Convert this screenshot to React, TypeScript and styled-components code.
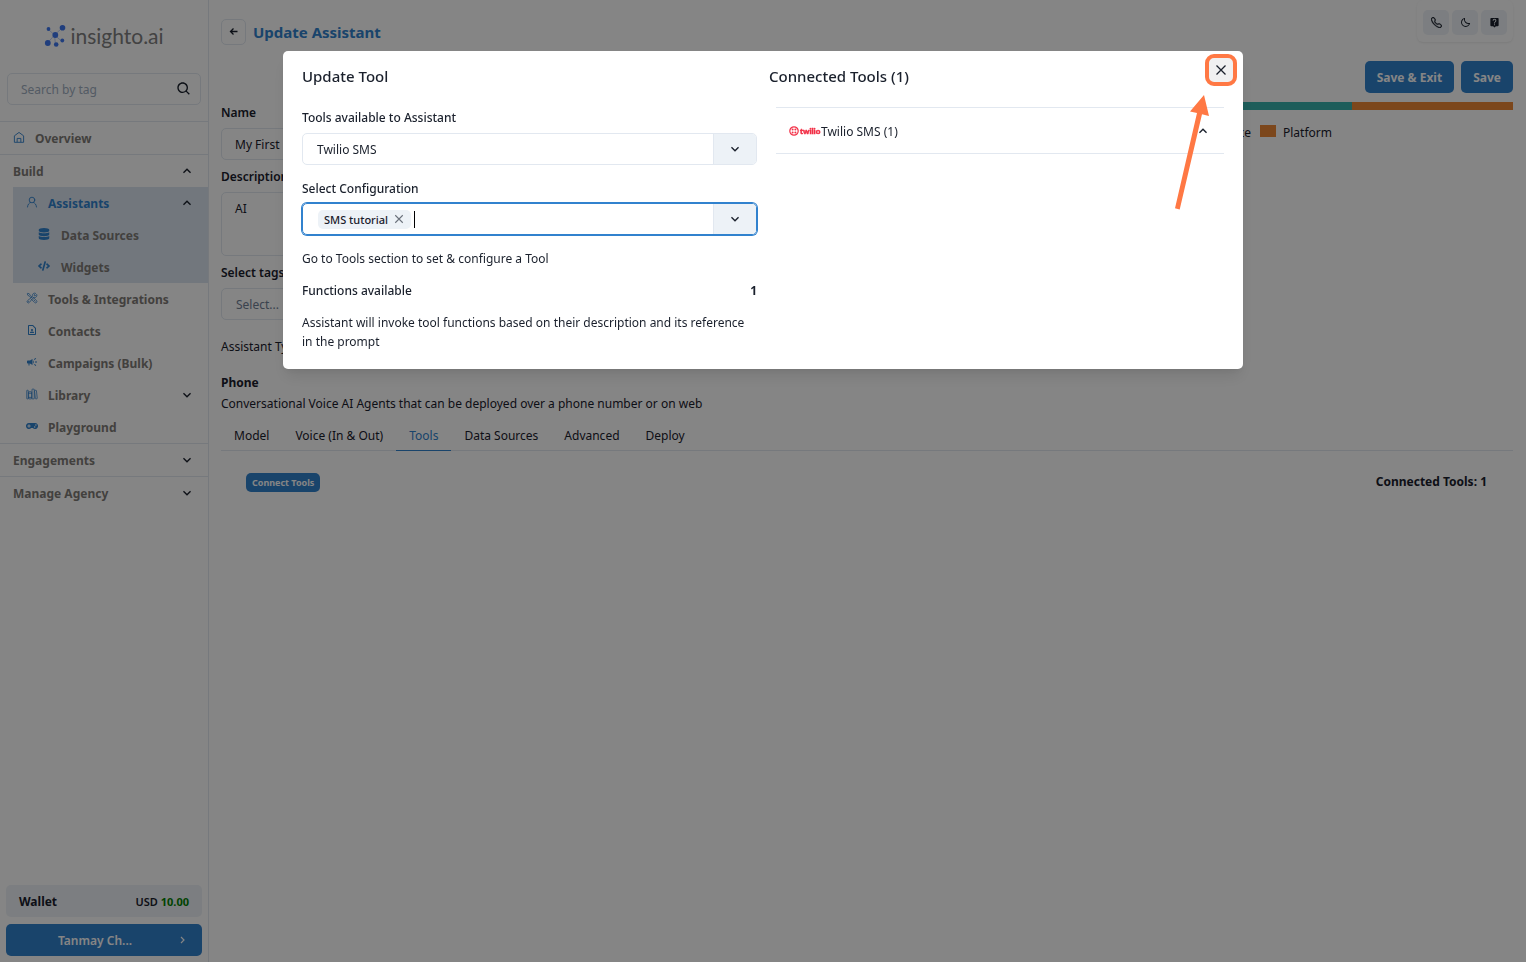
import React from 'react';
import styled, { createGlobalStyle } from 'styled-components';
import { BiMoon, BiSearch } from 'react-icons/bi';
import { FaCode, FaDatabase, FaGamepad } from 'react-icons/fa';
import { IoLibraryOutline } from 'react-icons/io5';
import { BsTelephone } from 'react-icons/bs';
import { HiOutlineWrenchScrewdriver } from 'react-icons/hi2';
import { MdCampaign, MdLiveHelp, MdOutlineContactPage } from 'react-icons/md';

const c = {
  text: '#1a202c',
  nav: '#7f7c78',
  blue: '#3182ce',
  line: '#e2e8f0',
  soft: '#edf2f7',
  selected: '#dbe5f0',
  orange: '#ed8936',
  teal: '#38b2ac',
  marker: '#ff7844',
};

const Global = createGlobalStyle`
  *, *::before, *::after { box-sizing: border-box; }
  body {
    margin: 0;
    color: ${c.text};
    background: #fff;
    font: 400 12px/19px "Segoe UI", "Noto Sans", "Open Sans", sans-serif;
  }
  button, input, textarea, select { font: inherit; color: inherit; margin: 0; }
  button { cursor: pointer; border: 0; background: none; padding: 0; }
  h1, h2, h3, p, ul { margin: 0; padding: 0; }
  ul { list-style: none; }
  a { color: inherit; text-decoration: none; }
`;

/* ---------- shell ---------- */

const Shell = styled.div`
  display: flex;
  min-height: 100vh;
`;

const Sidebar = styled.nav`
  flex: none;
  display: flex;
  flex-direction: column;
  width: 209px;
  border-right: 1px solid ${c.line};
`;

const Brand = styled.a`
  display: flex;
  align-items: center;
  justify-content: center;
  gap: 4px;
  height: 73px;
  padding-bottom: 2px;
  color: #808080;
  font: 400 21px/24px Lato, sans-serif;
`;

const SearchBox = styled.label`
  display: flex;
  align-items: center;
  justify-content: space-between;
  height: 32px;
  margin: 0 7px 16px;
  padding: 0 8px 0 13px;
  border: 1px solid ${c.line};
  border-radius: 5px;
`;

const SearchInput = styled.input`
  flex: 1;
  min-width: 0;
  padding: 0;
  border: 0;
  outline: 0;
  background: none;
  &::placeholder { color: #a0aec0; opacity: 1; }
`;

const Section = styled.section`
  border-top: 1px solid ${c.line};
`;

const NavRow = styled.a<{ $level?: number; $active?: boolean }>`
  display: flex;
  align-items: center;
  height: 32px;
  padding-right: 13px;
  padding-left: ${({ $level = 0 }) => [13, 26, 38][$level]}px;
  color: ${({ $active }) => ($active ? c.blue : c.nav)};
  font-weight: 700;
`;

const NavIcon = styled.span<{ $gap: number }>`
  display: flex;
  justify-content: center;
  width: 12px;
  margin-right: ${({ $gap }) => $gap}px;
  padding-bottom: 2px;
  color: ${c.blue};
  font-size: 12px;
`;

const NavText = styled.span`
  flex: 1;
`;

const NavToggle = styled.span`
  display: flex;
  color: ${c.text};
`;

const Highlight = styled.div`
  margin-left: 13px;
  background: ${c.selected};
  ${NavRow} { margin-left: -13px; }
`;

const SidebarFoot = styled.div`
  display: flex;
  flex-direction: column;
  gap: 7px;
  margin-top: auto;
  padding: 0 6px 6px;
`;

const Wallet = styled.div`
  display: flex;
  align-items: center;
  justify-content: space-between;
  height: 32px;
  padding: 1px 13px 0;
  border-radius: 5px;
  background: ${c.soft};
  font-weight: 700;
`;

const Balance = styled.span`
  font-size: 11px;
  font-weight: 600;
  b { color: green; font-weight: 700; }
`;

const Account = styled.button`
  display: flex;
  align-items: center;
  height: 32px;
  padding: 0 13px 0 8px;
  border-radius: 5px;
  background: ${c.blue};
  color: #fff;
  font-weight: 600;
  span { flex: 1; }
`;

/* ---------- main column ---------- */

const Main = styled.main`
  flex: 1;
  min-width: 0;
  padding: 0 13px 0 12px;
`;

const TopBar = styled.header`
  display: flex;
  align-items: flex-start;
  justify-content: space-between;
  height: 61px;
`;

const TitleGroup = styled.div`
  display: flex;
  align-items: center;
  gap: 7px;
  padding-top: 19px;
`;

const BackButton = styled.button`
  display: grid;
  place-items: center;
  width: 25px;
  height: 26px;
  border: 1px solid ${c.line};
  border-radius: 5px;
`;

const PageTitle = styled.h1`
  color: ${c.blue};
  font-size: 15px;
  line-height: 24px;
  font-weight: 700;
`;

const QuickActions = styled.div`
  display: flex;
  gap: 3px;
  padding: 10px 6px 7px;
  border-radius: 6px;
  box-shadow: 0 1px 2px rgba(0, 0, 0, 0.08);
`;

const QuickButton = styled.button`
  display: grid;
  place-items: center;
  width: 26px;
  height: 25px;
  border-radius: 5px;
  background: ${c.soft};
  font-size: 11px;
`;

const Actions = styled.div`
  display: flex;
  justify-content: flex-end;
  gap: 7px;
`;

const PrimaryButton = styled.button<{ $small?: boolean }>`
  height: ${({ $small }) => ($small ? 19 : 32)}px;
  padding: 0 ${({ $small }) => ($small ? 6 : 12)}px;
  border-radius: 5px;
  background: ${c.blue};
  color: #fff;
  font-size: ${({ $small }) => ($small ? 9 : 12)}px;
  line-height: 19px;
  font-weight: 700;
`;

const Overview = styled.div`
  display: grid;
  grid-template-columns: 1fr 1fr;
  gap: 6px;
  padding-top: 9px;
`;

const Form = styled.form`
  display: flex;
  flex-direction: column;
  padding-top: 1px;
`;

const Field = styled.label`
  display: flex;
  flex-direction: column;
  gap: 6px;
  margin-bottom: 7px;
  font-weight: 600;
`;

const TextInput = styled.input`
  height: 32px;
  padding: 0 13px;
  border: 1px solid ${c.line};
  border-radius: 5px;
  font-weight: 400;
`;

const TextArea = styled.textarea`
  height: 64px;
  padding: 6px 13px;
  border: 1px solid ${c.line};
  border-radius: 5px;
  font-weight: 400;
  resize: none;
`;

const TagSelect = styled.select`
  height: 32px;
  padding: 0 14px;
  border: 1px solid ${c.line};
  border-radius: 5px;
  background: none;
  color: #718096;
  font-weight: 400;
  appearance: none;
`;

const TypeLine = styled.p`
  padding: 10px 0 9px;
`;

const CostBar = styled.div`
  display: flex;
  height: 8px;
`;

const CostPart = styled.div<{ $share: number; $color: string }>`
  flex: ${({ $share }) => $share};
  background: ${({ $color }) => $color};
`;

const Legend = styled.div`
  display: flex;
  justify-content: flex-end;
  gap: 9px;
  padding: 13px 181px 0 0;
`;

const LegendItem = styled.span`
  display: flex;
  align-items: flex-start;
  gap: 7px;
`;

const Swatch = styled.span<{ $color: string }>`
  width: 16px;
  height: 12px;
  margin-top: 2px;
  background: ${({ $color }) => $color};
`;

const KindTitle = styled.h2`
  padding-top: 8px;
  font-size: 12px;
  line-height: 19px;
  font-weight: 700;
`;

const KindText = styled.p`
  padding: 2px 0 7px;
`;

const Tabs = styled.div`
  display: flex;
  border-bottom: 1px solid ${c.line};
`;

const Tab = styled.button<{ $active?: boolean }>`
  height: 31px;
  margin-bottom: -1px;
  padding: 0 13px;
  border-bottom: 1px solid ${({ $active }) => ($active ? c.blue : 'transparent')};
  color: ${({ $active }) => ($active ? c.blue : c.text)};
`;

const ToolsPanel = styled.div`
  display: flex;
  align-items: flex-end;
  justify-content: space-between;
  height: 41px;
  padding: 0 26px 0 25px;
`;

const ToolCount = styled.strong`
  padding-bottom: 1px;
  font-weight: 700;
`;

/* ---------- dialog ---------- */

const Backdrop = styled.div`
  position: fixed;
  inset: 0;
  display: flex;
  align-items: flex-start;
  justify-content: center;
  padding: 51px 16px;
  background: rgba(0, 0, 0, 0.48);
`;

const Dialog = styled.div`
  position: relative;
  display: grid;
  grid-template-columns: 1fr 1fr;
  gap: 12px;
  width: 960px;
  max-width: 100%;
  padding: 13px 19px 18px;
  border-radius: 5px;
  background: #fff;
  box-shadow: 0 10px 15px -3px rgba(0, 0, 0, 0.1), 0 4px 6px -2px rgba(0, 0, 0, 0.05);
`;

const DialogTitle = styled.h2`
  font-size: 15px;
  line-height: 24px;
  font-weight: 500;
`;

const Label = styled.label`
  display: block;
  font-weight: 500;
`;

const Pane = styled.div`
  display: flex;
  flex-direction: column;
  min-width: 0;
`;

const PaneField = styled.div`
  display: flex;
  flex-direction: column;
  gap: 6px;
  padding-top: 20px;
  & + & {
    gap: 5px;
    padding: 14px 0 1px;
  }
`;

const Combo = styled.div<{ $focused?: boolean }>`
  display: flex;
  align-items: stretch;
  height: 32px;
  overflow: hidden;
  border: 1px solid ${({ $focused }) => ($focused ? c.blue : c.line)};
  border-radius: 5px;
  box-shadow: ${({ $focused }) => ($focused ? `0 0 0 1px ${c.blue}` : 'none')};
`;

const ComboSelect = styled.select`
  flex: 1;
  padding: 0 14px;
  border: 0;
  outline: 0;
  background: none;
  appearance: none;
`;

const ComboValue = styled.div`
  flex: 1;
  display: flex;
  align-items: center;
  padding-left: 15px;
`;

const Tag = styled.span`
  display: flex;
  align-items: center;
  gap: 5px;
  height: 19px;
  padding: 0 6px;
  border-radius: 5px;
  background: ${c.soft};
  font-size: 11px;
  font-weight: 500;
  button { display: grid; place-items: center; width: 12px; height: 12px; color: #6b717b; }
`;

const Caret = styled.span`
  width: 1px;
  height: 17px;
  margin-left: 3px;
  background: #000;
`;

const ComboInput = styled.input`
  flex: 1;
  min-width: 0;
  padding: 0;
  border: 0;
  outline: 0;
`;

const ComboToggle = styled.button`
  display: grid;
  place-items: center;
  width: 43px;
  border-left: 1px solid ${c.line};
  background: ${c.soft};
`;

const Note = styled.p`
  padding-top: 13px;
`;

const CountRow = styled.div`
  display: flex;
  justify-content: space-between;
  padding-top: 13px;
  font-weight: 500;
  b { font-weight: 700; }
`;

const Accordion = styled.div`
  margin: 19px 0 0 7px;
  border: solid ${c.line};
  border-width: 1px 0;
`;

const AccordionButton = styled.button`
  display: flex;
  align-items: center;
  width: 100%;
  height: 45px;
  padding: 1px 13px 0;
  text-align: left;
  span { flex: 1; }
`;

const CloseButton = styled.button`
  position: absolute;
  top: 3px;
  right: 6px;
  display: grid;
  place-items: center;
  width: 32px;
  height: 32px;
  border: 4px solid ${c.marker};
  border-radius: 9px;
  background: #f0f0f1;
`;

const Pointer = styled.svg`
  position: absolute;
  top: 44px;
  right: 30px;
  pointer-events: none;
`;

/* ---------- drawings ---------- */

const Chevron = ({ up = false }: { up?: boolean }) => (
  <svg width="16" height="16" viewBox="0 0 24 24" aria-hidden="true">
    <path
      fill="currentColor"
      d={up ? 'M12 8l-6 6 1.41 1.41L12 10.83l4.59 4.58L18 14z' : 'M16.59 8.59L12 13.17 7.41 8.59 6 10l6 6 6-6z'}
    />
  </svg>
);

const Cross = ({ size }: { size: number }) => (
  <svg width={size} height={size} viewBox="0 0 12 12" fill="none" stroke="currentColor" strokeWidth="1.3" aria-hidden="true">
    <path d="M1.500 1.500l9 9M10.500 1.500l-9 9" />
  </svg>
);

const HomeIcon = () => (
  <svg width="13" height="13" viewBox="0 0 13 13" fill="none" stroke="currentColor" strokeLinejoin="round" aria-hidden="true">
    <path d="M1.500 4.700L6.500 1l5 3.700v7h-10zM4.500 11.500v-4h4v4" />
  </svg>
);

const PersonIcon = () => (
  <svg width="12" height="12" viewBox="0 0 12 12" fill="none" stroke="currentColor" strokeWidth=".9" strokeLinecap="round" aria-hidden="true">
    <circle cx="6" cy="4" r="2.800" />
    <path d="M1.500 11c.3-2.600 1.500-4 3-4.500M10.500 11c-.3-2.600-1.500-4-3-4.500" />
  </svg>
);

const LogoMark = () => (
  <svg width="22" height="24" viewBox="0 0 22 24" fill="#3f77ef" aria-hidden="true">
    <path d="M4 5l6.500 6L18 4M10.500 11L3.500 19M10.500 11L11.500 21M10.500 11L17.500 17" stroke="#3f77ef" strokeOpacity=".5" strokeWidth=".7" fill="none" />
    <circle cx="4.500" cy="5" r="1.900" />
    <circle cx="18.500" cy="3.700" r="2.800" />
    <circle cx="11.300" cy="11" r="2.900" />
    <circle cx="3.800" cy="19" r="2.900" />
    <circle cx="12.200" cy="20.500" r="2.300" />
    <circle cx="18.300" cy="16.500" r="1.900" />
  </svg>
);

const TwilioLogo = () => (
  <svg width="32" height="10" viewBox="0 0 32 10" aria-hidden="true">
    <circle cx="5" cy="5" r="4.200" fill="none" stroke="#f22f46" strokeWidth="1.200" />
    <g fill="#f22f46">
      <circle cx="3.600" cy="3.600" r="1" />
      <circle cx="6.400" cy="3.600" r="1" />
      <circle cx="3.600" cy="6.400" r="1" />
      <circle cx="6.400" cy="6.400" r="1" />
    </g>
    <text x="11" y="7.500" fill="#f22f46" stroke="#f22f46" strokeWidth=".5" fontFamily="Lato, sans-serif" fontWeight="900" fontSize="8">twilio</text>
  </svg>
);

const items = [
  { icon: <HiOutlineWrenchScrewdriver />, text: 'Tools & Integrations' },
  { icon: <MdOutlineContactPage />, text: 'Contacts' },
  { icon: <MdCampaign />, text: 'Campaigns (Bulk)' },
  { icon: <IoLibraryOutline />, text: 'Library', more: true },
  { icon: <FaGamepad />, text: 'Playground' },
];

const tabs = ['Model', 'Voice (In & Out)', 'Tools', 'Data Sources', 'Advanced', 'Deploy'];

export default function App() {
  return (
    <>
      <Global />
      <Shell>
        <Sidebar>
          <Brand href="#home">
            <LogoMark />
            insighto.ai
          </Brand>
          <SearchBox>
            <SearchInput aria-label="Search by tag" placeholder="Search by tag" />
            <BiSearch size={16} />
          </SearchBox>
          <Section>
            <NavRow href="#overview">
              <NavIcon $gap={10}><HomeIcon /></NavIcon>
              <NavText>Overview</NavText>
            </NavRow>
          </Section>
          <Section>
            <NavRow href="#build">
              <NavText>Build</NavText>
              <NavToggle><Chevron up /></NavToggle>
            </NavRow>
            <Highlight>
              <NavRow href="#assistants" $level={1} $active>
                <NavIcon $gap={10}><PersonIcon /></NavIcon>
                <NavText>Assistants</NavText>
                <NavToggle><Chevron up /></NavToggle>
              </NavRow>
              <NavRow href="#data" $level={2}>
                <NavIcon $gap={11}><FaDatabase /></NavIcon>
                <NavText>Data Sources</NavText>
              </NavRow>
              <NavRow href="#widgets" $level={2}>
                <NavIcon $gap={11}><FaCode /></NavIcon>
                <NavText>Widgets</NavText>
              </NavRow>
            </Highlight>
            {items.map((item) => (
              <NavRow key={item.text} href="#item" $level={1}>
                <NavIcon $gap={10}>{item.icon}</NavIcon>
                <NavText>{item.text}</NavText>
                {item.more && <NavToggle><Chevron /></NavToggle>}
              </NavRow>
            ))}
          </Section>
          {['Engagements', 'Manage Agency'].map((name) => (
            <Section key={name}>
              <NavRow href="#section">
                <NavText>{name}</NavText>
                <NavToggle><Chevron /></NavToggle>
              </NavRow>
            </Section>
          ))}
          <SidebarFoot>
            <Wallet>
              Wallet
              <Balance>USD <b>10.00</b></Balance>
            </Wallet>
            <Account>
              <span>Tanmay Ch...</span>
              <svg width="13" height="13" viewBox="0 0 13 13" fill="none" stroke="currentColor" strokeWidth="1.2" aria-hidden="true">
                <path d="M5 3l3 3-3 3" />
              </svg>
            </Account>
          </SidebarFoot>
        </Sidebar>

        <Main>
          <TopBar>
            <TitleGroup>
              <BackButton aria-label="Back">
                <svg width="10" height="10" viewBox="0 0 10 10" fill="none" stroke="currentColor" strokeWidth="1.300" aria-hidden="true">
                  <path d="M8.500 4.500H1.500M4.500 1.500l-3 3 3 3" />
                </svg>
              </BackButton>
              <PageTitle>Update Assistant</PageTitle>
            </TitleGroup>
            <QuickActions>
              <QuickButton aria-label="Call"><BsTelephone strokeWidth=".6" /></QuickButton>
              <QuickButton aria-label="Dark mode"><BiMoon /></QuickButton>
              <QuickButton aria-label="Help"><MdLiveHelp /></QuickButton>
            </QuickActions>
          </TopBar>
          <Actions>
            <PrimaryButton>Save &amp; Exit</PrimaryButton>
            <PrimaryButton>Save</PrimaryButton>
          </Actions>
          <Overview>
            <Form>
              <Field>Name<TextInput defaultValue="My First" /></Field>
              <Field>Description<TextArea defaultValue="AI" /></Field>
              <Field>
                Select tags
                <TagSelect><option>Select...</option></TagSelect>
              </Field>
              <TypeLine>Assistant Type</TypeLine>
            </Form>
            <div>
              <CostBar>
                <CostPart $share={3} $color={c.teal} />
                <CostPart $share={1} $color={c.orange} />
              </CostBar>
              <Legend>
                <LegendItem>Voice</LegendItem>
                <LegendItem><Swatch $color={c.orange} />Platform</LegendItem>
              </Legend>
            </div>
          </Overview>
          <KindTitle>Phone</KindTitle>
          <KindText>Conversational Voice AI Agents that can be deployed over a phone number or on web</KindText>
          <Tabs role="tablist">
            {tabs.map((name) => (
              <Tab key={name} role="tab" aria-selected={name === 'Tools'} $active={name === 'Tools'}>{name}</Tab>
            ))}
          </Tabs>
          <ToolsPanel>
            <PrimaryButton $small>Connect Tools</PrimaryButton>
            <ToolCount>Connected Tools: 1</ToolCount>
          </ToolsPanel>
        </Main>
      </Shell>

      <Backdrop>
        <Dialog role="dialog" aria-modal="true" aria-labelledby="dialog-title">
          <Pane>
            <DialogTitle id="dialog-title">Update Tool</DialogTitle>
            <PaneField>
              <Label htmlFor="tool">Tools available to Assistant</Label>
              <Combo>
                <ComboSelect id="tool"><option>Twilio SMS</option></ComboSelect>
                <ComboToggle aria-label="Show tools"><Chevron /></ComboToggle>
              </Combo>
            </PaneField>
            <PaneField>
              <Label htmlFor="configuration">Select Configuration</Label>
              <Combo $focused>
                <ComboValue>
                  <Tag>SMS tutorial<button aria-label="Remove SMS tutorial"><Cross size={10} /></button></Tag>
                  <Caret />
                  <ComboInput id="configuration" />
                </ComboValue>
                <ComboToggle aria-label="Show configurations"><Chevron /></ComboToggle>
              </Combo>
            </PaneField>
            <Note>Go to Tools section to set &amp; configure a Tool</Note>
            <CountRow><span>Functions available</span><b>1</b></CountRow>
            <Note>Assistant will invoke tool functions based on their description and its reference in the prompt</Note>
          </Pane>
          <Pane>
            <DialogTitle>Connected Tools (1)</DialogTitle>
            <Accordion>
              <AccordionButton aria-expanded="true">
                <TwilioLogo />
                <span>Twilio SMS (1)</span>
                <Chevron up />
              </AccordionButton>
            </Accordion>
          </Pane>
          <CloseButton aria-label="Close"><Cross size={12} /></CloseButton>
          <Pointer width="42" height="116" viewBox="0 0 42 116" fill={c.marker} aria-hidden="true">
            <path d="M33 0L38 21 31 19.300 8.700 114.500 4 113.300 26 18 19 16.500z" />
          </Pointer>
        </Dialog>
      </Backdrop>
    </>
  );
}
